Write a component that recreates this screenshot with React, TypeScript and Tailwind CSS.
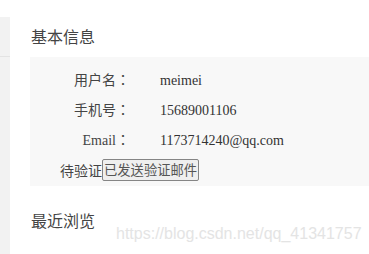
const rows = [
  { label: '用户名', value: 'meimei' },
  { label: '手机号', value: '15689001106' },
  { label: 'Email', value: '1173714240@qq.com' },
];

export default function App() {
  return (
    <div className="flex h-[254px] w-[369px] overflow-hidden bg-white font-['Noto_Sans_CJK_SC',sans-serif] text-[#333]">
      <aside className="mt-[17px] flex w-[10px] shrink-0 flex-col bg-[#f2f2f2]">
        <div className="h-[40px] border-b border-[#e3e3e3]" />
      </aside>
      <main className="relative flex-1 pl-5">
        <h2 className="flex h-[57px] items-center pl-[1px] pt-[15px] text-[16px] leading-none text-[#444]">基本信息</h2>
        <div className="flex h-[129px] flex-col bg-[#f8f8f8] pl-[30px] pt-2 text-[14px]">
          {rows.map((row) => (
            <div key={row.label} className="flex h-[30px] items-center">
              <span className="w-[70px] shrink-0 text-right font-['Liberation_Serif','Noto_Sans_CJK_SC',serif] text-[#444]">
                {row.label}
                <span className="font-['Noto_Sans_CJK_TC',sans-serif]">：</span>
              </span>
              <span className="ml-[30px] font-['Liberation_Serif',serif] text-[#333]">{row.value}</span>
            </div>
          ))}
          <div className="flex h-[30px] items-center text-[#444]">
            <span>待验证</span>
            <button
              type="button"
              className="h-[22px] rounded-[2px] border border-[#858585] bg-[#efefef] px-[1px] text-[13.3px] leading-none text-[#555]"
            >
              已发送验证邮件
            </button>
          </div>
        </div>
        <h2 className="pl-[1px] pt-[26px] text-[16px] leading-none text-[#444]">最近浏览</h2>
        <div className="absolute left-[106px] top-[226px] font-['Liberation_Sans',sans-serif] text-[16px] leading-none text-[#e4e4e4]">
          https://blog.csdn.net/qq_41341757
        </div>
      </main>
    </div>
  );
}
